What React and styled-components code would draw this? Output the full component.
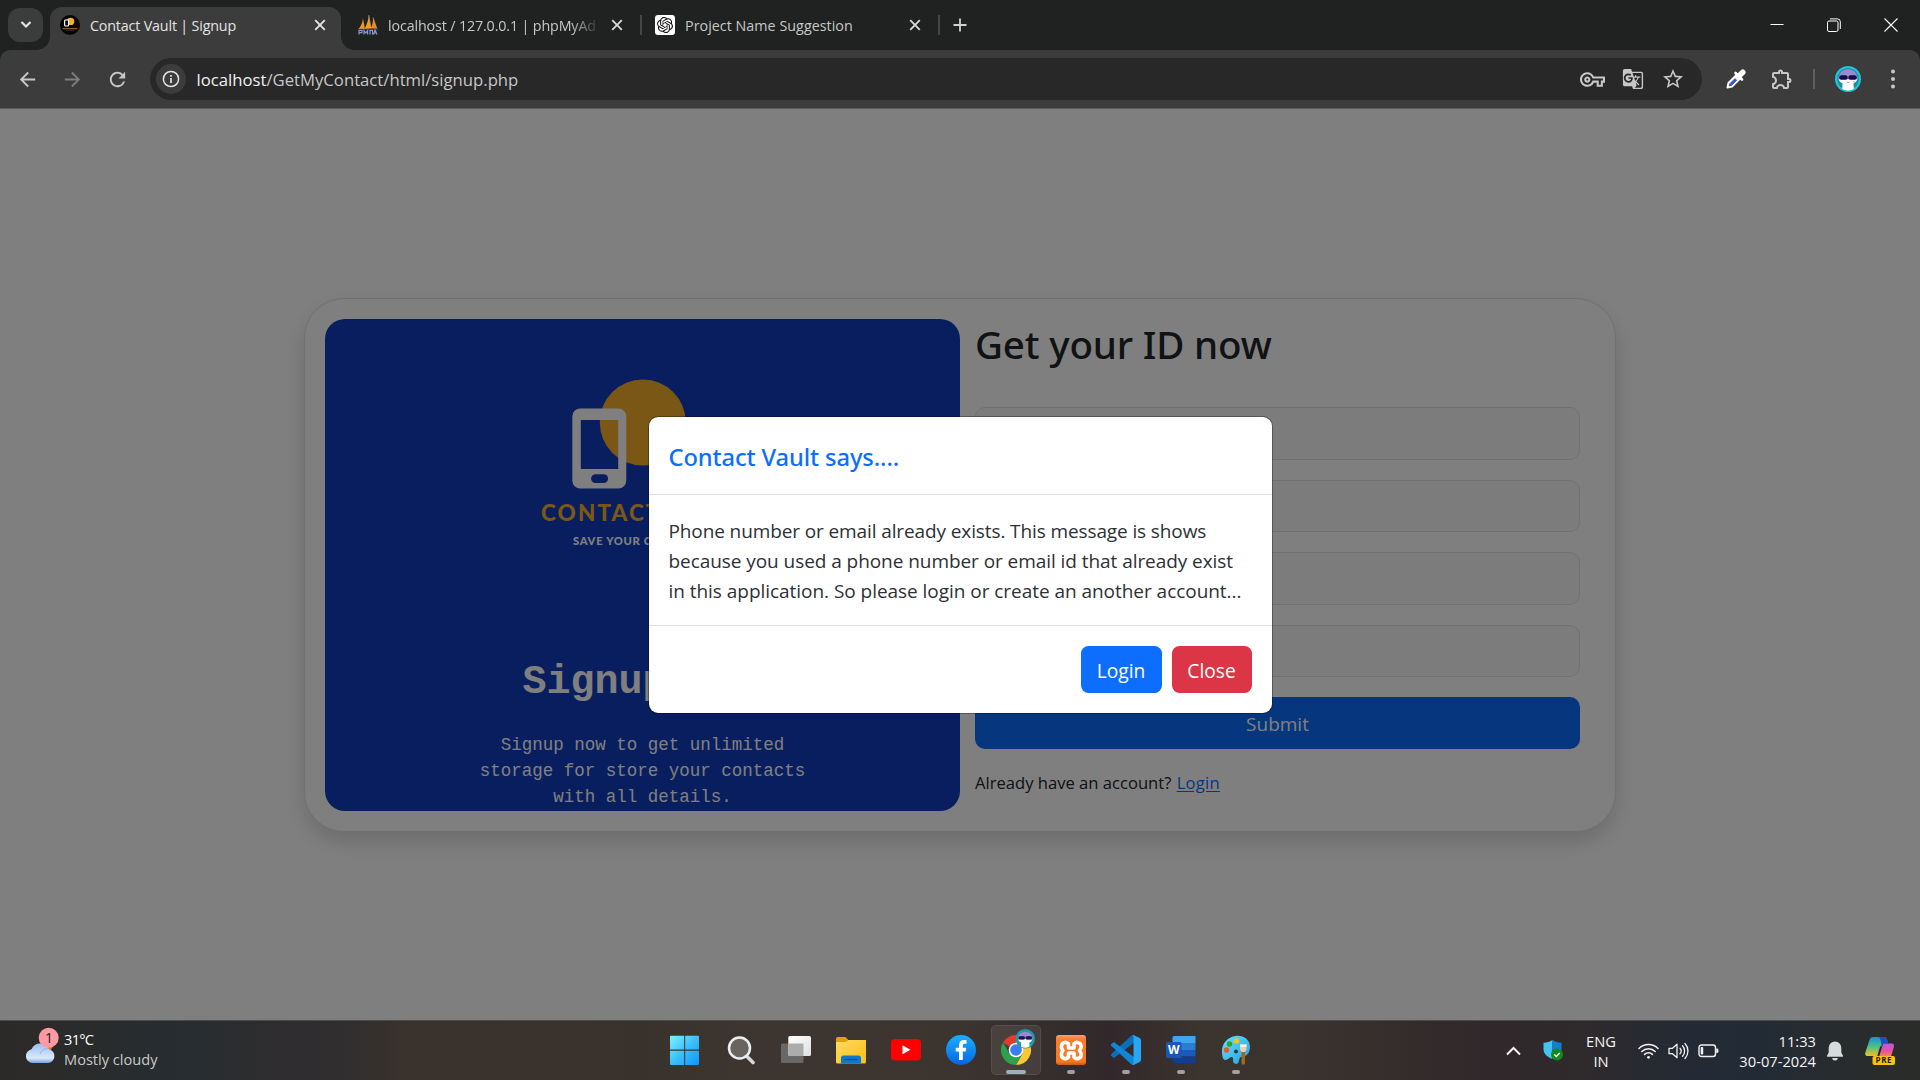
import React from 'react';
import styled, { createGlobalStyle, css } from 'styled-components';
import {
  MdArrowBack, MdArrowForward, MdRefresh, MdOutlineVpnKey, MdGTranslate,
  MdStarOutline, MdOutlineExtension,
} from 'react-icons/md';
import { SiOpenai } from 'react-icons/si';

const UI = '"Open Sans", "Noto Sans", sans-serif';
const HEADING = '"Noto Sans", "Open Sans", sans-serif';
const MONO = '"Liberation Mono", "Courier New", monospace';

const Global = createGlobalStyle`
  * { box-sizing: border-box; }
  body { margin: 0; background: #fff; overflow: hidden; font-family: ${UI}; }
  svg { display: block; flex: none; }
  button { border: 0; margin: 0; padding: 0; background: none; font-family: inherit; }
`;

const Desktop = styled.div`
  width: 1920px;
  height: 1080px;
  display: grid;
  grid-template-rows: 50px 59px 911px 60px;
  overflow: hidden;
`;

/* ---------- tab strip ---------- */

const TabStrip = styled.header`
  display: flex;
  background: #202221;
`;

const TabSearch = styled.button`
  width: 35px;
  height: 34px;
  margin: 8px 7px 0 8px;
  border-radius: 12px;
  background: #3b3c3c;
  display: grid;
  place-items: center;
`;

const Tab = styled.div`
  position: relative;
  width: ${p => p.$width}px;
  height: 43px;
  margin-top: 7px;
  padding: 0 ${p => p.$right}px 7px ${p => p.$left}px;
  display: flex;
  align-items: center;
  color: ${p => (p.$active ? '#e3e3e3' : '#c7c7c7')};
  ${p => p.$active && css`
    background: #3c3c3c;
    border-radius: 12px 12px 0 0;
    &::before, &::after {
      content: '';
      position: absolute;
      bottom: 0;
      width: 13px;
      height: 13px;
    }
    &::before { left: -13px; background: radial-gradient(circle at 0 0, transparent 12.5px, #3c3c3c 13px); }
    &::after { right: -13px; background: radial-gradient(circle at 100% 0, transparent 12.5px, #3c3c3c 13px); }
  `}
`;

const TabTitle = styled.span`
  flex: 1;
  min-width: 0;
  margin: 0 13px 0 10px;
  padding-top: 1px;
  overflow: hidden;
  white-space: nowrap;
  font-size: 14.3px;
  line-height: 22px;
  letter-spacing: ${p => p.$spacing || 0}px;
  ${p => p.$fade && css`mask-image: linear-gradient(90deg, #000 88%, rgba(0, 0, 0, 0.15) 100%);`}
`;

const TabDivider = styled.i`
  width: 2px;
  height: 20px;
  margin: 15px -1px 0;
  background: #444746;
`;

const NewTab = styled.button`
  width: 42px;
  height: 50px;
  display: grid;
  place-items: center;
`;

const WindowControls = styled.div`
  display: flex;
  margin-left: auto;
  padding-right: 1px;
`;

const WindowButton = styled.button`
  width: 57px;
  height: 50px;
  display: grid;
  place-items: center;
`;

/* ---------- toolbar ---------- */

const ToolbarBack = styled.div`background: #202221;`;

const Toolbar = styled.nav`
  height: 59px;
  padding: 8px 0 8px 5px;
  display: flex;
  background: #3c3c3c;
  border-radius: 10px 10px 0 0;
  border-bottom: 1px solid #5c5c5c;
`;

const ToolButton = styled.button`
  width: ${p => p.$width || 45}px;
  height: 42px;
  display: grid;
  place-items: center;
  color: ${p => p.$color || '#c7c7c7'};
`;

const AddressBar = styled.div`
  width: 1552px;
  height: 42px;
  margin: 0 11px 0 10px;
  padding: 0 9.5px 0 6px;
  border-radius: 21px;
  background: #282828;
  display: flex;
  align-items: center;
`;

const SiteInfo = styled.span`
  width: 30px;
  height: 30px;
  border-radius: 50%;
  background: #3c3c3c;
  display: grid;
  place-items: center;
`;

const Url = styled.span`
  flex: 1;
  margin-left: 10.5px;
  padding-top: 1px;
  font-size: 16.7px;
  line-height: 24px;
  color: #c7c7c7;
  b { font-weight: 400; color: #f1f1f1; }
`;

const ToolDivider = styled.i`
  width: 2px;
  height: 20px;
  margin: 11px 10px 0 8px;
  background: #5f5f5f;
`;

/* ---------- page ---------- */

const Page = styled.main`
  position: relative;
  display: grid;
  place-items: center;
  background: #fff;
`;

const Card = styled.section`
  width: 1312px;
  height: 534px;
  padding: 20px;
  display: grid;
  grid-template-columns: 635px 605px;
  column-gap: 15px;
  background: #fff;
  border: 1px solid #dee2e6;
  border-radius: 40px;
  box-shadow: 0 10px 20px rgba(0, 0, 0, 0.15);
`;

const Brand = styled.div`
  height: 492px;
  padding-top: 55px;
  overflow: hidden;
  border-radius: 20px;
  background: #103cbe;
  display: flex;
  flex-direction: column;
  align-items: center;
`;

const LogoName = styled.strong`
  width: 203px;
  margin-top: 6px;
  white-space: nowrap;
  font: 900 22.5px/26px Lato, sans-serif;
  letter-spacing: 2.1px;
  color: #f6ae2d;
`;

const LogoTagline = styled.span`
  width: 139px;
  margin-top: 8px;
  white-space: nowrap;
  font: 900 11.2px/14px Lato, sans-serif;
  letter-spacing: 0.7px;
  color: #fff;
`;

const BrandTitle = styled.h2`
  margin: 111px 0 0;
  font: 700 40px/48px ${MONO};
  color: #fff;
`;

const BrandText = styled.p`
  width: 340px;
  margin: 25px 0 0;
  text-align: center;
  font: 400 17.5px/26px ${MONO};
  color: #fff;
`;

const Form = styled.form`
  display: flex;
  flex-direction: column;
`;

const FormTitle = styled.h2`
  margin: 1px 0 39.7px;
  font: 500 38.5px/48px ${HEADING};
  letter-spacing: -0.15px;
  color: #212529;
`;

const Field = styled.input`
  width: 605px;
  height: 52.5px;
  margin: 0 0 20px;
  padding: 10px 20px;
  border: 1px solid #dee2e6;
  border-radius: 10px;
  background: #f8f9fa;
`;

const Submit = styled.button`
  height: 52px;
  padding-top: 2px;
  border-radius: 10px;
  background: #0d6efd;
  color: #fff;
  font-size: 19px;
`;

const Already = styled.p`
  margin: 20.5px 0 0;
  font-size: 16.6px;
  line-height: 26px;
  color: #212529;
  a { margin-left: 1px; color: #0d6efd; text-underline-offset: 2px; letter-spacing: 0.25px; }
`;

const Backdrop = styled.div`
  position: absolute;
  inset: 0;
  display: grid;
  place-items: center;
  background: rgba(0, 0, 0, 0.5);
`;

const Modal = styled.div`
  width: 625px;
  height: 298px;
  border: 1px solid rgba(0, 0, 0, 0.3);
  border-radius: 10px;
  background: #fff;
  background-clip: padding-box;
`;

const ModalHeader = styled.h5`
  height: 78px;
  margin: 0;
  padding: 22px 20px 0;
  border-bottom: 1px solid #dee2e6;
  font: 500 23.7px/37px ${HEADING};
  letter-spacing: -0.1px;
  color: #0d6efd;
`;

const ModalBody = styled.div`
  height: 131px;
  padding: 21px 20px 0;
  border-bottom: 1px solid #dee2e6;
  font-size: 19px;
  line-height: 30px;
  color: #2d3135;
`;

const Line = styled.span`
  display: block;
  white-space: nowrap;
  letter-spacing: ${p => p.$spacing}px;
`;

const ModalFooter = styled.div`
  padding: 20px 20px 0;
  display: flex;
  justify-content: flex-end;
  gap: 10px;
`;

const ModalButton = styled.button`
  width: ${p => p.$width}px;
  height: 47px;
  padding-top: 3px;
  border-radius: 7.5px;
  background: ${p => p.$bg};
  color: #fff;
  font-size: 19.2px;
`;

/* ---------- taskbar ---------- */

const Taskbar = styled.footer`
  display: grid;
  grid-template-columns: 659px 601px 660px;
  border-top: 1px solid #4b4b4b;
  background: linear-gradient(90deg, #2c2a28 0, #2a2b2b 80px, #262d31 170px, #2f2d2f 280px, #302e2f 340px,
    #3a322c 410px, #38322d 640px, #3d3630 760px, #3b342f 960px, #32282b 1110px, #3c342e 1200px, #3a332e 1300px,
    #30282a 1490px, #2f2a2c 1580px, #232a35 1690px, #222b35 1760px, #292c2c 1860px, #2a2c2a 1920px);
`;

const Weather = styled.div`
  padding: 4px 0 0 25px;
  display: flex;
`;

const WeatherText = styled.div`
  margin: 4px 0 0 4px;
  font-size: 14.6px;
  line-height: 20px;
  color: #c9c9c9;
  b { display: block; font-weight: 400; color: #fff; letter-spacing: -0.7px; }
`;

const Apps = styled.div`
  padding: 4px 0 0 2px;
  display: flex;
  gap: 5px;
`;

const AppSlot = styled.div`
  width: 50px;
  height: 50px;
  padding-top: ${p => (p.$active ? 9 : 10)}px;
  display: flex;
  flex: none;
  flex-direction: column;
  align-items: center;
  border-radius: 5px;
  ${p => p.$active && css`
    background: rgba(255, 255, 255, 0.08);
    border: 1px solid rgba(255, 255, 255, 0.08);
  `}
  &::after {
    content: '';
    width: ${p => (p.$active ? 20 : 8)}px;
    height: 4px;
    margin-top: 5px;
    border-radius: 2px;
    background: ${p => (p.$active ? '#9fb0b6' : p.$running ? '#a3a09e' : 'transparent')};
  }
`;

const Tray = styled.div`
  padding-right: 14px;
  display: flex;
  justify-content: flex-end;
  align-items: center;
  color: #f5f5f5;
`;

const TrayItem = styled.div`
  width: ${p => p.$width}px;
  display: grid;
  justify-items: ${p => (p.$end ? 'end' : 'center')};
  font-size: 14.7px;
  line-height: 20px;
  white-space: nowrap;
  padding-top: ${p => p.$top || 0}px;
`;

/* ---------- drawings ---------- */

const CrossIcon = ({ size = 16, color = '#d6d6d6', w = 1.9 }) => (
  <svg width={size} height={size} viewBox="0 0 16 16" stroke={color} strokeWidth={w} fill="none">
    <path d="M3.2 3.2l9.6 9.6M12.8 3.2l-9.6 9.6" />
  </svg>
);

const VaultFavicon = () => (
  <svg width="20" height="20" viewBox="0 0 20 20">
    <circle cx="10" cy="10" r="10" fill="#050505" />
    <circle cx="10.6" cy="6.4" r="3.7" fill="#f6ae2d" />
    <rect x="4.6" y="5" width="4" height="6" rx=".8" fill="#111" stroke="#fff" strokeWidth="1.1" />
    <path d="M2.5 13.6h15" stroke="#8a6119" strokeWidth="1.3" />
    <path d="M6 15.6h8" stroke="#444" strokeWidth=".6" />
  </svg>
);

const PmaFavicon = () => (
  <svg width="20" height="20" viewBox="0 0 20 20">
    <path d="M.5 14C3 11 4.500 8 5 3.500L7 14Z" fill="#f0962a" />
    <path d="M6.500 14C9 9 10.500 5 10.700 0L13.200 13.500Z" fill="#f89c1c" />
    <path d="M12.500 13.500C14.500 10 15 7 15 2.500L19 13.500Z" fill="#f28a12" />
    <path d="M10.800 0l2.200 13M15 2.500l3.800 11" stroke="#a8a8a8" strokeWidth=".6" />
    <path d="M1 19.500v-4h3v2.200H1M6 19.500v-4l1.800 2.500 1.800-2.500v4M12 19.500v-4h2.500v4M15.500 19.500l1.500-4.500 2 4.500M16 18h2.500" fill="none" stroke="#8f96c4" strokeWidth="1.200" />
    <path d="M0 14.200h20" stroke="#565b85" strokeWidth=".8" />
  </svg>
);

const OpenAiTile = styled.span`
  width: 20px;
  height: 20px;
  border-radius: 3px;
  background: #fff;
  color: #111;
  display: grid;
  place-items: center;
`;

const RobotAvatar = ({ size }) => (
  <svg width={size} height={size} viewBox="0 0 26 26">
    <circle cx="13" cy="13" r="13" fill="#22c3dc" />
    <circle cx="13" cy="13" r="10.800" fill="#198fa3" />
    <path d="M3.500 11.500a9.500 8.200 0 0 1 19 0z" fill="#9a8bd0" />
    <path d="M3.500 11.500h19c0 3-1.500 5-4 6v1l.3 4.500a12 12 0 0 1-11.600 0l.3-4.500v-1c-2.500-1-4-3-4-6z" fill="#fff" />
    <path d="M3.500 10.800h19v2.400h-19z" fill="#7e6fc4" />
    <rect x="4.300" y="9.300" width="8.300" height="4.400" rx="2" fill="#150d4b" />
    <rect x="13.400" y="9.300" width="8.300" height="4.400" rx="2" fill="#150d4b" />
    <path d="M12 16.300h2.500" stroke="#777" strokeWidth=".7" />
    <path d="M18.500 15l1 2" stroke="#9a8bd0" strokeWidth=".8" />
  </svg>
);

const Dropper = () => (
  <svg width="22" height="22" viewBox="0 0 22 22">
    <path d="M2.500 19.500l1-4.500L12 6.500l3.500 3.500L7 18.500z" fill="#fff" stroke="#fff" strokeWidth="2" strokeLinejoin="round" />
    <path d="M4.300 17.700l.6-2 5-5 1.800 1.500-5 5z" fill="#3c55c8" stroke="#3c55c8" />
    <path d="M10.500 5l6.500 6.500" stroke="#fff" strokeWidth="2.600" strokeLinecap="round" />
    <path d="M13.500 8.500l4.300-4.300" stroke="#fff" strokeWidth="5.500" strokeLinecap="round" />
  </svg>
);

const PhoneLogo = () => (
  <svg width="151" height="120" viewBox="0 0 151 120">
    <circle cx="75.800" cy="48.500" r="43" fill="#f6ae2d" />
    <path fillRule="evenodd" fill="#fff" d="M13.300 34.500h38a8 8 0 0 1 8 8v64a8 8 0 0 1-8 8h-38a8 8 0 0 1-8-8v-64a8 8 0 0 1 8-8zM13.800 46v49h37.400V46z" />
    <rect x="24.100" y="100.200" width="17" height="8.800" rx="4.400" fill="#103cbe" />
  </svg>
);

const CloudIcon = () => (
  <svg width="35" height="40" viewBox="0 0 35 40">
    <defs>
      <linearGradient id="cloud" x1="0" y1="0" x2="0" y2="1">
        <stop offset="0" stopColor="#9dbdf2" /><stop offset=".75" stopColor="#dbe8fb" /><stop offset="1" stopColor="#7aa0e0" />
      </linearGradient>
    </defs>
    <circle cx="22" cy="20" r="6" fill="#f26a12" />
    <path d="M7 38a7 7 0 0 1-.5-13.800A9.500 9.500 0 0 1 24 24.200 7 7 0 0 1 23 38z" fill="url(#cloud)" />
    <path d="M15 29c1.500-4 5-6 8.500-5" stroke="#8db0ee" fill="none" />
    <circle cx="23.700" cy="12.700" r="10" fill="#ff99a4" />
    <text x="23.900" y="17.700" textAnchor="middle" fontFamily="Open Sans, sans-serif" fontSize="14" fill="#1b1b1b">1</text>
  </svg>
);

const WindowsIcon = () => (
  <svg width="30" height="30" viewBox="0 0 30 30">
    <defs>
      <linearGradient id="win" x1="0" y1="0" x2="1" y2="1">
        <stop offset="0" stopColor="#7df3ff" /><stop offset=".5" stopColor="#3cc0fb" /><stop offset="1" stopColor="#0a96f8" />
      </linearGradient>
    </defs>
    <g transform="translate(-1.500 0)">
      <path fill="url(#win)" d="M1.500.7h13.200v13.800H.5V1.700a1 1 0 0 1 1-1zM15.700.7h12.800a1 1 0 0 1 1 1v12.800H15.700zM.5 15.700h14.200v14.200H1.500a1 1 0 0 1-1-1zM15.700 15.700h13.800v13.200a1 1 0 0 1-1 1H15.700z" />
    </g>
  </svg>
);

const WindowsSlotIcon = styled.span`
  svg { overflow: visible; }
`;

const SearchIcon = () => (
  <svg width="30" height="30" viewBox="0 0 30 30">
    <path d="M20 20.500l7 7" stroke="#d5d9dc" strokeWidth="3.600" strokeLinecap="round" />
    <circle cx="13.500" cy="13" r="10.500" fill="#6a645f" stroke="#eceef0" strokeWidth="2.500" />
  </svg>
);

const TaskViewIcon = () => (
  <svg width="30" height="30" viewBox="0 0 30 30">
    <defs><linearGradient id="tv" x1="0" y1="0" x2="1" y2="1"><stop offset="0" stopColor="#fff" /><stop offset="1" stopColor="#e0e0e0" /></linearGradient></defs>
    <rect x="0" y="8.500" width="22.500" height="19.500" rx="1.500" fill="#686868" />
    <rect x="7.300" y="1" width="22.700" height="20" rx="1.500" fill="url(#tv)" />
    <path d="M7.300 8.500h15.200V21H8.800a1.500 1.500 0 0 1-1.500-1.500z" fill="#acacac" />
  </svg>
);

const FolderIcon = () => (
  <svg width="30" height="30" viewBox="0 0 30 30">
    <defs><linearGradient id="fold" x1="0" y1="0" x2="1" y2="1"><stop offset="0" stopColor="#ffdc62" /><stop offset="1" stopColor="#fbbd14" /></linearGradient></defs>
    <path d="M0 3.500A1.500 1.500 0 0 1 1.500 2h8L12.500 5H28v6H0z" fill="#e2a00a" />
    <path d="M0 7h9.500l3-2H30v22a1.500 1.500 0 0 1-1.500 1.500h-27A1.500 1.500 0 0 1 0 27z" fill="url(#fold)" />
    <path d="M5 28.500V23a2.500 2.500 0 0 1 2.500-2.500h15A2.500 2.500 0 0 1 25 23v5.500z" fill="#0e77c9" />
    <path d="M8.500 24.500h13" stroke="#064a8a" strokeWidth="1.200" />
  </svg>
);

const YouTubeIcon = () => (
  <svg width="30" height="30" viewBox="0 0 30 30">
    <rect x="0" y="4" width="30" height="21.500" rx="4" fill="#f00" />
    <path d="M11.500 10.300v9l8-4.500z" fill="#fff" />
  </svg>
);

const FacebookIcon = () => (
  <svg width="30" height="30" viewBox="0 0 30 30">
    <defs><linearGradient id="fb" x1="0" y1="0" x2="0" y2="1"><stop offset="0" stopColor="#1aaffe" /><stop offset="1" stopColor="#0665e0" /></linearGradient></defs>
    <circle cx="15" cy="15" r="15" fill="url(#fb)" />
    <path d="M13 25v-8.500H9.700v-3.700H13V10.200c0-3.300 2-5.100 5-5.100.9 0 2 .1 2.500.2v3.400h-1.700c-1.500 0-2 .9-2 1.900v2.200h3.500l-.6 3.700h-2.900V25z" fill="#fff" />
  </svg>
);

const ChromeSvg = styled.svg`
  margin: -6px -4px 0 0;
`;

const ChromeIcon = () => (
  <ChromeSvg width="34" height="36" viewBox="0 0 34 36">
    <path d="M15 21L2 13.500A15 15 0 0 1 28 13.500z" fill="#e33b2e" />
    <path d="M28 13.500A15 15 0 0 1 15 36L21.500 24.700 15 13.500z" fill="#fcc934" />
    <path d="M15 36l6.500-11.250h-13L2 13.500A15 15 0 0 0 15 36z" fill="#2da14c" />
    <circle cx="15" cy="21" r="7.300" fill="#fff" />
    <circle cx="15" cy="21" r="5.800" fill="#3b7df0" />
    <g transform="translate(14.500 0) scale(.75)">
      <circle cx="13" cy="13" r="13" fill="#1e9aa8" />
      <path d="M3.500 12a9.500 8.500 0 0 1 19 0z" fill="#9a8bd0" />
      <path d="M3.500 12h19c0 3.500-1.500 5-4 6v5.500a12 12 0 0 1-11 0V18c-2.500-1-4-2.500-4-6z" fill="#fff" />
      <path d="M3.500 9.500h19v4.500h-8l-1.500-1-1.500 1h-8z" fill="#7e6fc4" />
      <rect x="4" y="9.500" width="8.500" height="4.500" rx="2" fill="#1d1450" />
      <rect x="13.500" y="9.500" width="8.500" height="4.500" rx="2" fill="#1d1450" />
    </g>
  </ChromeSvg>
);

const XamppIcon = () => (
  <svg width="30" height="30" viewBox="0 0 30 30">
    <defs><linearGradient id="xa" x1="0" y1="0" x2="0" y2="1"><stop offset="0" stopColor="#f7a566" /><stop offset=".12" stopColor="#f9823a" /><stop offset=".2" stopColor="#fb7a24" /><stop offset=".88" stopColor="#f47a26" /><stop offset="1" stopColor="#cf5a14" /></linearGradient></defs>
    <rect width="30" height="30" rx="3" fill="url(#xa)" />
    <path
      d="M6.500 8.500q3.500-2.500 6 .5v4h5.500v-4q2.500-3 6-.500 2.500 3-.5 7 3 4 .5 7-3.500 2.500-6-.5v-4h-5.500v4q-2.500 3-6 .5-2.500-3 .5-7-3-4-.5-7z"
      fill="none" stroke="#fff" strokeWidth="3.600" strokeLinejoin="round"
    />
  </svg>
);

const VsCodeIcon = () => (
  <svg width="30" height="30" viewBox="0 0 100 100">
    <path fill="#0a6fb8" d="M96.460 10.800L75.860.876C73.470-.273 70.620.212 68.750 2.083L1.300 63.583c-1.810 1.654-1.810 4.510.003 6.162l5.510 5.009c1.485 1.350 3.722 1.450 5.321.236L93.361 13.370C96.086 11.303 100 13.246 100 16.667v-.24c0-2.400-1.375-4.589-3.540-5.631z" />
    <path fill="#0f86d6" d="M96.460 89.204l-20.600 9.920c-2.390 1.149-5.240.664-7.110-1.207L1.300 36.417c-1.810-1.654-1.810-4.510.003-6.162l5.510-5.009c1.485-1.350 3.722-1.450 5.321-.236L93.361 86.630C96.086 88.697 100 86.754 100 83.333v.24c0 2.400-1.375 4.589-3.540 5.631z" />
    <path fill="#28a5f3" d="M75.858 99.126c-2.386 1.148-5.236.663-7.108-1.210C71.056 100.223 75 98.590 75 95.328V4.672C75 1.410 71.056-.223 68.750 2.083 70.622.211 73.472-.274 75.858.874l20.600 9.907C98.623 11.822 100 14.011 100 16.413v67.174c0 2.402-1.377 4.592-3.541 5.633z" />
  </svg>
);

const WordIcon = () => (
  <svg width="30" height="30" viewBox="0 0 30 30">
    <path d="M8 1h21.500v7H6.500V2.500A1.500 1.500 0 0 1 8 1z" fill="#41a5ee" />
    <path d="M6.500 8h23v7h-23z" fill="#2b7cd3" />
    <path d="M6.500 15h23v6.500h-23z" fill="#185abd" />
    <path d="M6.500 21.500h23V26.500A1.500 1.500 0 0 1 28 28H8a1.500 1.500 0 0 1-1.500-1.500z" fill="#103f91" />
    <rect x="0" y="7" width="15.500" height="16" rx="1.500" fill="#1a56b8" />
    <text x="7.750" y="19.300" textAnchor="middle" fontFamily="Open Sans, sans-serif" fontWeight="700" fontSize="12" fill="#fff">W</text>
  </svg>
);

const PaintIcon = () => (
  <svg width="30" height="30" viewBox="0 0 30 30">
    <defs><linearGradient id="pal" x1="0" y1="0" x2="1" y2="1"><stop offset="0" stopColor="#6ae0fb" /><stop offset="1" stopColor="#1f9fe0" /></linearGradient></defs>
    <path d="M14.500 1C22.500 0 29 4.500 29 12c0 5-2.500 9-7 9.500-3.500.5-3.500 1.500-4 4.500-.4 2.500-2.500 3.500-4.500 2.500-2.500-1.500-.5-4.500-2-6-2-2-4 2.500-7 2.500C1.500 25 1 20 1 16 1 8 7 2 14.500 1z" fill="url(#pal)" />
    <circle cx="15.500" cy="6" r="2.700" fill="#fdc30f" /><circle cx="8.500" cy="9" r="2.700" fill="#2aa524" />
    <circle cx="5.500" cy="15" r="2.700" fill="#ee5426" /><circle cx="15" cy="16.500" r="2" fill="#203a4d" />
    <path d="M20.500 15h3.500v13a1.700 1.700 0 0 1-3.500 0z" fill="#a86516" />
    <path d="M19 9.500h6.500v5L24 17h-3.500L19 14.500z" fill="#e8cdb8" />
    <path d="M19 9.500h6.500v2.500H19z" fill="#fff3e6" />
  </svg>
);

const ShieldIcon = () => (
  <svg width="21" height="21" viewBox="0 0 21 21">
    <path d="M9.500 0C6.500 2 4 2.500.5 2.700V9c0 5 4 8 9 10z" fill="#42c3f4" />
    <path d="M9.500 0c3 2 5.500 2.500 9 2.700V9c0 5-4 8-9 10z" fill="#1380cf" />
    <circle cx="14" cy="14.500" r="6" fill="#14891c" />
    <path d="M11.300 14.600l2 1.900 3.400-3.600" fill="none" stroke="#fff" strokeWidth="1.400" />
  </svg>
);

const WifiIcon = () => (
  <svg width="21" height="18" viewBox="0 0 21 18" fill="none" stroke="#f2f2f2" strokeWidth="1.500" strokeLinecap="round">
    <path d="M1 6.500a13.500 13.500 0 0 1 19 0M3.800 9.500a9.500 9.500 0 0 1 13.400 0M6.600 12.400a5.500 5.500 0 0 1 7.800 0" />
    <circle cx="10.500" cy="15.300" r="1.400" fill="#f2f2f2" stroke="none" />
  </svg>
);

const VolumeIcon = () => (
  <svg width="21" height="18" viewBox="0 0 21 18" fill="none" stroke="#f2f2f2" strokeWidth="1.300" strokeLinecap="round" strokeLinejoin="round">
    <path d="M1 6.300h3.500L9 2.300v13.400l-4.500-4H1z" />
    <path d="M12 6.300a4 4 0 0 1 0 5.400M14.500 3.800a7.500 7.500 0 0 1 0 10.400M17 1.500a11 11 0 0 1 0 15" />
  </svg>
);

const BatteryIcon = () => (
  <svg width="21" height="14" viewBox="0 0 21 14">
    <rect x="1" y="1" width="16.500" height="11.500" rx="2.500" fill="none" stroke="#f2f2f2" strokeWidth="1.400" />
    <rect x="2.700" y="3" width="2.500" height="7.500" rx=".8" fill="#f2f2f2" />
    <path d="M18.300 4.500h.8a1.300 1.300 0 0 1 1.300 1.300v2a1.300 1.300 0 0 1-1.300 1.300h-.8z" fill="#f2f2f2" />
  </svg>
);

const BellIcon = () => (
  <svg width="18" height="20" viewBox="0 0 18 20" fill="#d5dcdc">
    <path d="M9 .5a6.300 6.300 0 0 1 6.300 6.300v4.700l1.700 3.300c.2.500-.1 1-.6 1H1.600c-.5 0-.8-.5-.6-1l1.700-3.300V6.800A6.300 6.300 0 0 1 9 .5zM6.300 17h5.400a2.700 2.500 0 0 1-5.400 0z" />
  </svg>
);

const CopilotIcon = () => (
  <svg width="30" height="30" viewBox="0 0 30 30">
    <defs>
      <linearGradient id="cpa" x1="0" y1="0" x2="0" y2="1"><stop offset="0" stopColor="#1490df" /><stop offset=".5" stopColor="#4cc08a" /><stop offset="1" stopColor="#f4c01c" /></linearGradient>
      <linearGradient id="cpb" x1="0" y1="0" x2="0" y2="1"><stop offset="0" stopColor="#b55ce8" /><stop offset=".6" stopColor="#ec4f9c" /><stop offset="1" stopColor="#f58a52" /></linearGradient>
    </defs>
    <path d="M8 1h10.500c2 0 3 1 3.500 2.500L23.200 7H20c-2 0-3 1-3.500 2.500L13 20H3c-2.500 0-3.300-1.500-2.500-4L4.500 4C5.200 2 6 1 8 1z" fill="url(#cpa)" />
    <path d="M13.500 1h5c2 0 3 1 3.500 2.500L23.200 7H20c-2 0-2.800.5-3.500 2.500C16 5 15.500 2 13.500 1z" fill="#1552c8" />
    <path d="M16 10.500L13 20" stroke="#2b2430" strokeWidth="1.600" />
    <path d="M19.500 7.500h7c2.300 0 3 1.500 2.300 3.800L26 20.500H14.200L17.300 10c.5-1.500 1-2.500 2.200-2.500z" fill="url(#cpb)" />
    <rect x="7.500" y="20" width="22.500" height="9" rx="2" fill="#fcc400" />
    <text x="18.900" y="27.400" textAnchor="middle" fontFamily="Open Sans, sans-serif" fontWeight="700" fontSize="8" letterSpacing=".6" fill="#1c1c1c">PRE</text>
  </svg>
);

const APPS = [
  { name: 'start', icon: <WindowsSlotIcon><WindowsIcon /></WindowsSlotIcon> },
  { name: 'search', icon: <SearchIcon /> },
  { name: 'taskview', icon: <TaskViewIcon /> },
  { name: 'files', icon: <FolderIcon /> },
  { name: 'youtube', icon: <YouTubeIcon /> },
  { name: 'facebook', icon: <FacebookIcon /> },
  { name: 'chrome', icon: <ChromeIcon />, active: true },
  { name: 'xampp', icon: <XamppIcon />, running: true },
  { name: 'vscode', icon: <VsCodeIcon />, running: true },
  { name: 'word', icon: <WordIcon />, running: true },
  { name: 'paint', icon: <PaintIcon />, running: true },
];

export default function App() {
  return (
    <Desktop>
      <Global />
      <TabStrip>
        <TabSearch>
          <svg width="12" height="8" viewBox="0 0 12 8" fill="none" stroke="#e3e3e3" strokeWidth="2.200"><path d="M1.500 1l4.500 4.500L10.500 1" /></svg>
        </TabSearch>
        <Tab $active $width={291} $left={10} $right={13}>
          <VaultFavicon />
          <TabTitle $spacing={-0.17}>Contact Vault | Signup</TabTitle>
          <CrossIcon color="#e3e3e3" />
        </Tab>
        <Tab $width={300} $left={17} $right={16}>
          <PmaFavicon />
          <TabTitle $fade $spacing={-0.14}>localhost / 127.0.0.1 | phpMyAdmin</TabTitle>
          <CrossIcon />
        </Tab>
        <TabDivider />
        <Tab $width={298} $left={14} $right={16}>
          <OpenAiTile><SiOpenai size={16} /></OpenAiTile>
          <TabTitle $spacing={0.03}>Project Name Suggestion</TabTitle>
          <CrossIcon />
        </Tab>
        <TabDivider />
        <NewTab>
          <svg width="14" height="14" viewBox="0 0 14 14" stroke="#d0d0d0" strokeWidth="1.800"><path d="M7 .5v13M.5 7h13" /></svg>
        </NewTab>
        <WindowControls>
          <WindowButton><svg width="14" height="14" viewBox="0 0 14 14"><path d="M.5 6.500h13" stroke="#fff" /></svg></WindowButton>
          <WindowButton>
            <svg width="14" height="14" viewBox="0 0 14 14" fill="none" stroke="#fff">
              <rect x=".5" y="3" width="10.500" height="10.500" rx="1.500" />
              <path d="M3 .9h7.500a2.800 2.800 0 0 1 2.800 2.800V11" />
            </svg>
          </WindowButton>
          <WindowButton><svg width="14" height="14" viewBox="0 0 14 14"><path d="M.5.5l13 13M13.500.5l-13 13" stroke="#fff" strokeWidth="1.100" /></svg></WindowButton>
        </WindowControls>
      </TabStrip>

      <ToolbarBack>
        <Toolbar>
          <ToolButton><MdArrowBack size={23} /></ToolButton>
          <ToolButton $color="#7c7c7c"><MdArrowForward size={23} /></ToolButton>
          <ToolButton><MdRefresh size={23} /></ToolButton>
          <AddressBar>
            <SiteInfo>
              <svg width="18" height="18" viewBox="0 0 18 18">
                <circle cx="9" cy="9" r="7.600" fill="none" stroke="#e3e3e3" strokeWidth="1.500" />
                <path d="M9 8v5M9 5v1.700" stroke="#e3e3e3" strokeWidth="1.700" />
              </svg>
            </SiteInfo>
            <Url><b>localhost</b>/GetMyContact/html/signup.php</Url>
            <ToolButton $width={40}><MdOutlineVpnKey size={25} /></ToolButton>
            <ToolButton $width={40}><MdGTranslate size={22} /></ToolButton>
            <ToolButton $width={40}><MdStarOutline size={24} /></ToolButton>
          </AddressBar>
          <ToolButton><Dropper /></ToolButton>
          <ToolButton $width={47}><MdOutlineExtension size={24} /></ToolButton>
          <ToolDivider />
          <ToolButton $width={46}><RobotAvatar size={26} /></ToolButton>
          <ToolButton $width={43}>
            <svg width="4" height="20" viewBox="0 0 4 20" fill="#c7c7c7"><circle cx="2" cy="2.500" r="2" /><circle cx="2" cy="10" r="2" /><circle cx="2" cy="17.500" r="2" /></svg>
          </ToolButton>
        </Toolbar>
      </ToolbarBack>

      <Page>
        <Card>
          <Brand>
            <PhoneLogo />
            <LogoName>CONTACT VAULT</LogoName>
            <LogoTagline>SAVE YOUR CONTACTS</LogoTagline>
            <BrandTitle>Signup Now</BrandTitle>
            <BrandText>Signup now to get unlimited storage for store your contacts with all details.</BrandText>
          </Brand>
          <Form>
            <FormTitle>Get your ID now</FormTitle>
            <Field /><Field /><Field /><Field />
            <Submit type="button">Submit</Submit>
            <Already>Already have an account? <a href="#login">Login</a></Already>
          </Form>
        </Card>
        <Backdrop>
          <Modal>
            <ModalHeader>Contact Vault says....</ModalHeader>
            <ModalBody>
              <Line $spacing={-0.11}>Phone number or email already exists. This message is shows</Line>
              <Line $spacing={-0.06}>because you used a phone number or email id that already exist</Line>
              <Line $spacing={-0.04}>in this application. So please login or create an another account...</Line>
            </ModalBody>
            <ModalFooter>
              <ModalButton $width={81} $bg="#0d6efd">Login</ModalButton>
              <ModalButton $width={80} $bg="#dc3545">Close</ModalButton>
            </ModalFooter>
          </Modal>
        </Backdrop>
      </Page>

      <Taskbar>
        <Weather>
          <CloudIcon />
          <WeatherText><b>31°C</b>Mostly cloudy</WeatherText>
        </Weather>
        <Apps>
          {APPS.map(a => (
            <AppSlot key={a.name} $active={a.active} $running={a.running}>{a.icon}</AppSlot>
          ))}
        </Apps>
        <Tray>
          <TrayItem $width={40}>
            <svg width="15" height="10" viewBox="0 0 15 10" fill="none" stroke="#f2f2f2" strokeWidth="2"><path d="M1 8.500l6.500-6.500L14 8.500" /></svg>
          </TrayItem>
          <TrayItem $width={40}><ShieldIcon /></TrayItem>
          <TrayItem $width={56}><span>ENG</span><span>IN</span></TrayItem>
          <TrayItem $width={30} $end><WifiIcon /></TrayItem>
          <TrayItem $width={30} $end><VolumeIcon /></TrayItem>
          <TrayItem $width={30} $end><BatteryIcon /></TrayItem>
          <TrayItem $width={97} $end><span>11:33</span><span>30-07-2024</span></TrayItem>
          <TrayItem $width={38} $top={1}><BellIcon /></TrayItem>
          <TrayItem $width={52} $top={1}><CopilotIcon /></TrayItem>
        </Tray>
      </Taskbar>
    </Desktop>
  );
}
